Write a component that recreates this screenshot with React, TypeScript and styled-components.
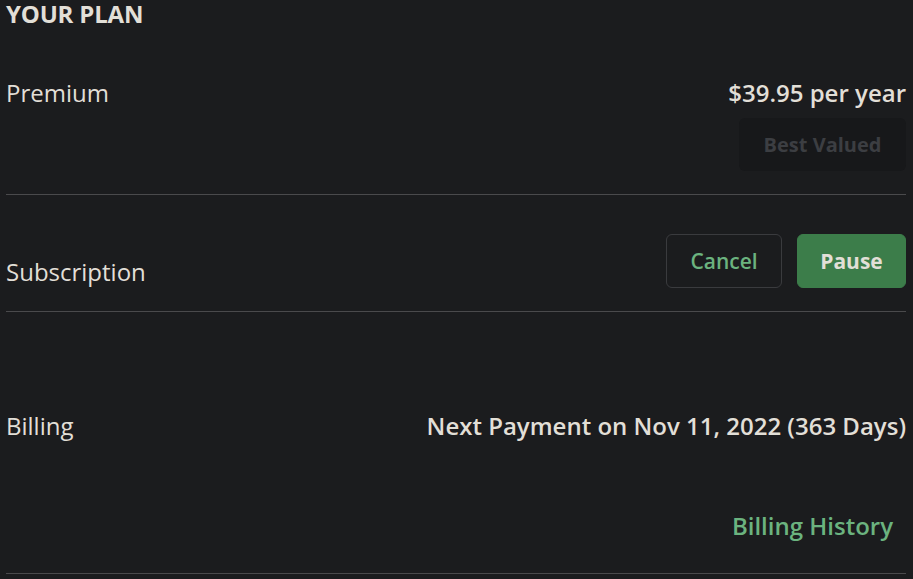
import React from "react";
import styled, { createGlobalStyle } from "styled-components";

const Global = createGlobalStyle`
  html, body { margin: 0; padding: 0; background: #1b1c1e; }
  body { font-family: "Open Sans", "Noto Sans", sans-serif; color: #e2dfd7; }
`;

const Page = styled.div`
  width: 913px;
  height: 579px;
  box-sizing: border-box;
  padding: 0 7px 0 6px;
  overflow: hidden;
`;

const Title = styled.h2`
  margin: 0;
  font-size: 24px;
  font-weight: 700;
  line-height: 28px;
  letter-spacing: -0.2px;
`;

const Section = styled.section<{ $pt: number; $pb: number; $align?: string }>`
  display: flex;
  justify-content: space-between;
  align-items: ${(p) => p.$align || "flex-start"};
  padding: ${(p) => p.$pt}px 0 ${(p) => p.$pb}px;
  border-bottom: 1px solid #4a4a4c;
`;

const Label = styled.div<{ $mt?: number }>`
  font-size: 24px;
  line-height: 32px;
  font-weight: 400;
  margin-top: ${(p) => p.$mt || 0}px;
`;

const Column = styled.div<{ $gap: number }>`
  display: flex;
  flex-direction: column;
  align-items: flex-end;
  gap: ${(p) => p.$gap}px;
`;

const Value = styled.div`
  font-size: 24px;
  line-height: 32px;
  font-weight: 600;
`;

const Badge = styled.div`
  width: 167px;
  height: 53px;
  display: flex;
  align-items: center;
  justify-content: center;
  background: #17181a;
  border-radius: 6px;
  color: #3c3e42;
  font-size: 20px;
  font-weight: 700;
`;

const Actions = styled.div`
  display: flex;
  gap: 15px;
`;

const Button = styled.button<{ $primary?: boolean; $w: number }>`
  width: ${(p) => p.$w}px;
  height: 54px;
  box-sizing: border-box;
  border-radius: 6px;
  font-family: inherit;
  font-size: 21px;
  font-weight: ${(p) => (p.$primary ? 700 : 600)};
  cursor: pointer;
  border: 1px solid ${(p) => (p.$primary ? "#3c7d4a" : "#3a3b3e")};
  background: ${(p) => (p.$primary ? "#3c7d4a" : "transparent")};
  color: ${(p) => (p.$primary ? "#e2dfd7" : "#6bb37f")};
`;

const Link = styled.a`
  font-size: 24px;
  line-height: 32px;
  font-weight: 600;
  color: #6bb37f;
  padding-right: 13px;
  text-decoration: none;
  cursor: pointer;
`;

export default function App() {
  return (
    <>
      <Global />
      <Page>
        <Title>YOUR PLAN</Title>
        <Section $pt={49} $pb={23}>
          <Label>Premium</Label>
          <Column $gap={9}>
            <Value>$39.95 per year</Value>
            <Badge>Best Valued</Badge>
          </Column>
        </Section>
        <Section $pt={39} $pb={23}>
          <Label $mt={22}>Subscription</Label>
          <Actions>
            <Button $w={116}>Cancel</Button>
            <Button $primary $w={109}>Pause</Button>
          </Actions>
        </Section>
        <Section $pt={98} $pb={31}>
          <Label>Billing</Label>
          <Column $gap={68}>
            <Value>Next Payment on Nov 11, 2022 (363 Days)</Value>
            <Link>Billing History</Link>
          </Column>
        </Section>
      </Page>
    </>
  );
}
